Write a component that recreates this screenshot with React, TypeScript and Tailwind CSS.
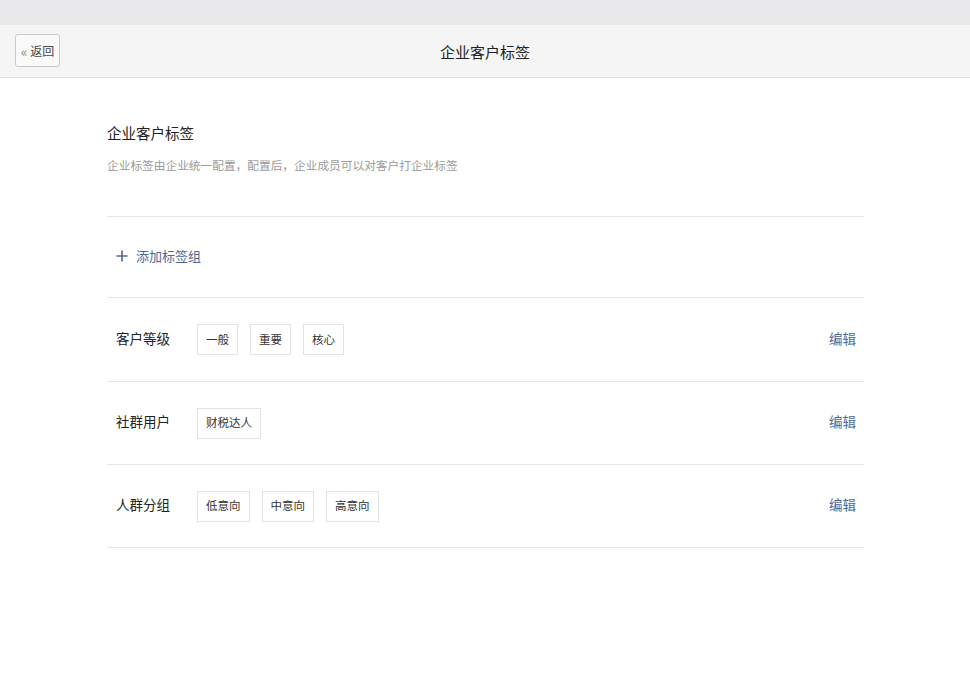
import React from "react";

const font = { fontFamily: '"Noto Sans CJK SC", "Noto Sans", sans-serif' };

const groups = [
  { name: "客户等级", tags: ["一般", "重要", "核心"] },
  { name: "社群用户", tags: ["财税达人"] },
  { name: "人群分组", tags: ["低意向", "中意向", "高意向"] },
];

export default function App() {
  return (
    <div className="w-[970px] h-[696px] bg-white text-[#333]" style={font}>
      <div className="h-[25px] bg-[#e9e9eb]" />
      <div className="relative h-[53px] bg-[#f5f5f5] border-b border-[#e2e2e2] flex items-center justify-center">
        <button className="absolute left-[15px] top-[9px] w-[45px] h-[33px] border border-[#c9c9c9] rounded-[3px] bg-[#fafafa] text-[12px] text-[#444] flex items-center justify-center gap-[3px]">
          <span className="text-[#888] text-[14px] leading-none">«</span>
          <span>返回</span>
        </button>
        <div className="text-[15px] text-[#222] leading-none">企业客户标签</div>
      </div>
      <div className="pl-[107px] w-[864px]">
        <div className="mt-[45px] text-[14.5px] leading-[20px] text-[#222]">企业客户标签</div>
        <div className="mt-[13px] text-[11.7px] leading-[18px] text-[#9a9a9a]">
          企业标签由企业统一配置，配置后，企业成员可以对客户打企业标签
        </div>
        <div className="mt-[42px] border-t border-[#e6e6e6]" />
        <div className="h-[81px] flex items-center pl-[9px] text-[#4b6a97] border-b border-[#e6e6e6]">
          <svg width="12" height="12" viewBox="0 0 12 12" className="mr-[8px] -mt-[2px]">
            <path d="M6 0.5V11.5M0.5 6H11.5" stroke="#4b6a97" strokeWidth="1.6" />
          </svg>
          <span className="text-[13px] -mt-[2px]">添加标签组</span>
        </div>
        {groups.map((g, i) => (
          <div
            key={g.name}
            className={
              (i === 0 ? "h-[84px] " : "h-[83px] ") +
              "flex items-center pl-[9px] pr-[8px] border-b border-[#e6e6e6]"
            }
          >
            <div className="w-[81px] text-[13.5px] text-[#222] -mt-[3px]">{g.name}</div>
            <div className="flex gap-[12px] flex-1">
              {g.tags.map((t) => (
                <div
                  key={t}
                  className="h-[31px] px-[8px] border border-[#e3e3e3] flex items-center text-[11.5px] text-[#333]"
                >
                  {t}
                </div>
              ))}
            </div>
            <div className="text-[13.5px] text-[#4b6a97] -mt-[3px]">编辑</div>
          </div>
        ))}
      </div>
    </div>
  );
}
